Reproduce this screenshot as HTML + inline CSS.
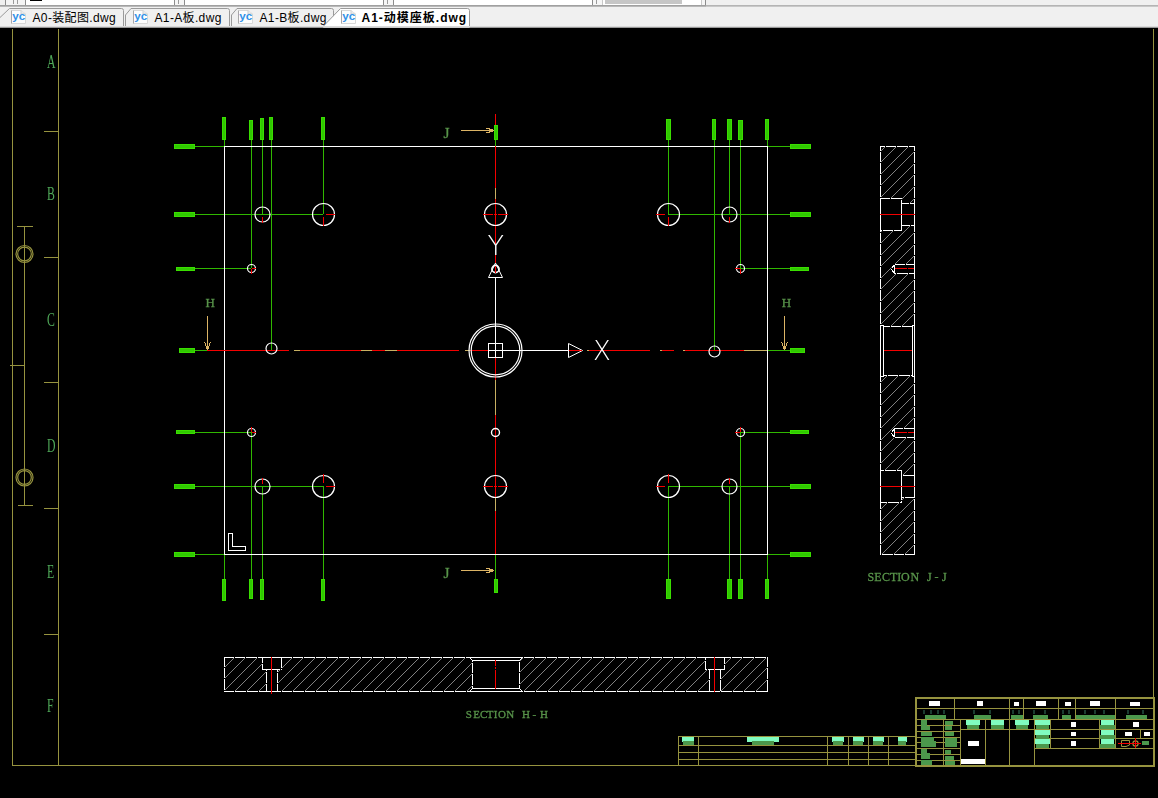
<!DOCTYPE html>
<html><head><meta charset="utf-8"><title>A1-动模座板.dwg</title>
<style>
html,body{margin:0;padding:0;background:#000;}
body{width:1158px;height:798px;position:relative;overflow:hidden;font-family:"Liberation Sans","Noto Sans CJK SC",sans-serif;}
#cad{position:absolute;left:0;top:0;}
#cad text{filter:url(#nolcd)}
#cad rect,#cad line{shape-rendering:crispEdges}
#cad text{font-family:"Liberation Serif","Noto Serif CJK SC",serif;}
#cad text.ucs{font-family:"DejaVu Sans Light","DejaVu Sans","Liberation Sans",sans-serif;font-weight:200}
#cad text.zl{font-family:"Liberation Serif",serif;}
#cad text.sc,#cad text.lb{stroke:#58944a;stroke-width:.3px}

#tb{position:absolute;left:0;top:0;width:1158px;height:5px;background:#f0f0f0;overflow:hidden}
#tb div{position:absolute;top:0;height:5px}
#tb .vd{width:1px;background:#8c8c8c}
#tb .mk{width:1px;height:4px;background:#9a9a9a}
#sep1{position:absolute;left:0;top:5px;width:1158px;height:1px;background:linear-gradient(90deg,#a0a0a0 0,#a0a0a0 706px,#b4b4b4 706px)}
#sep2{position:absolute;left:0;top:6px;width:1158px;height:1px;background:linear-gradient(90deg,#b8b8b8 0,#b8b8b8 706px,#c8c8c8 706px)}
#strip{position:absolute;left:0;top:7px;width:1158px;height:21px;background:#f0f0f0;border-bottom:0}
#strip:after{content:"";position:absolute;left:0;top:19px;width:1158px;height:1px;background:#dadada}
#strip:before{content:"";position:absolute;left:0;top:20px;width:1158px;height:1px;background:#989898}
#tabsvg{position:absolute;left:0;top:0}
.tl{position:absolute;top:4px;font-size:12px;line-height:14px;color:#000;white-space:nowrap;letter-spacing:0.35px}
.tl.b{font-weight:bold;letter-spacing:1.0px}
.ico{position:absolute;top:3px;width:15px;height:14px}
</style></head><body>
<svg id="cad" width="1158" height="798" viewBox="0 0 1158 798">
<defs><filter id="nolcd" x="-20%" y="-20%" width="140%" height="140%"><feOffset dx="0" dy="0"/></filter></defs>
<rect x="0" y="28" width="1158" height="770" fill="#000"/>
<rect x="12" y="29" width="1" height="736" fill="#96933f"/>
<rect x="58" y="29" width="1" height="736" fill="#96933f"/>
<rect x="1153" y="29" width="1" height="669" fill="#96933f"/>
<rect x="12" y="765" width="904" height="1" fill="#96933f"/>
<rect x="44" y="131" width="14" height="1" fill="#96933f"/>
<rect x="44" y="257" width="14" height="1" fill="#96933f"/>
<rect x="44" y="382" width="14" height="1" fill="#96933f"/>
<rect x="44" y="508" width="14" height="1" fill="#96933f"/>
<rect x="44" y="634" width="14" height="1" fill="#96933f"/>
<rect x="24" y="226" width="1" height="279" fill="#96933f"/>
<rect x="17" y="226" width="16" height="1" fill="#96933f"/>
<rect x="18" y="505" width="15" height="1" fill="#96933f"/>
<rect x="10" y="365" width="14" height="1" fill="#96933f"/>
<circle cx="24.5" cy="254" r="8.5" stroke="#96933f" stroke-width="1.2" fill="none"/>
<circle cx="24.5" cy="254" r="6.8" stroke="#96933f" stroke-width="1.2" fill="none"/>
<circle cx="24.5" cy="477.5" r="8.5" stroke="#96933f" stroke-width="1.2" fill="none"/>
<circle cx="24.5" cy="477.5" r="6.8" stroke="#96933f" stroke-width="1.2" fill="none"/>
<text transform="translate(47,68) scale(0.62,1)" fill="#4fa858" font-size="19" class="zl">A</text>
<text transform="translate(47,200) scale(0.62,1)" fill="#4fa858" font-size="19" class="zl">B</text>
<text transform="translate(47,326) scale(0.62,1)" fill="#4fa858" font-size="19" class="zl">C</text>
<text transform="translate(47,452) scale(0.62,1)" fill="#4fa858" font-size="19" class="zl">D</text>
<text transform="translate(47,578) scale(0.62,1)" fill="#4fa858" font-size="19" class="zl">E</text>
<text transform="translate(47,712) scale(0.62,1)" fill="#4fa858" font-size="19" class="zl">F</text>
<rect x="222" y="117" width="4" height="23" fill="#3ade00"/>
<rect x="223" y="118" width="2" height="21" fill="#30c800"/>
<rect x="249" y="120" width="4" height="20" fill="#3ade00"/>
<rect x="250" y="121" width="2" height="18" fill="#30c800"/>
<rect x="260" y="118" width="4" height="22" fill="#3ade00"/>
<rect x="261" y="119" width="2" height="20" fill="#30c800"/>
<rect x="269" y="117" width="4" height="23" fill="#3ade00"/>
<rect x="270" y="118" width="2" height="21" fill="#30c800"/>
<rect x="321" y="117" width="4" height="23" fill="#3ade00"/>
<rect x="322" y="118" width="2" height="21" fill="#30c800"/>
<rect x="666" y="119" width="5" height="21" fill="#3ade00"/>
<rect x="667" y="120" width="3" height="19" fill="#30c800"/>
<rect x="712" y="119" width="4" height="21" fill="#3ade00"/>
<rect x="713" y="120" width="2" height="19" fill="#30c800"/>
<rect x="727" y="119" width="5" height="21" fill="#3ade00"/>
<rect x="728" y="120" width="3" height="19" fill="#30c800"/>
<rect x="738" y="120" width="5" height="20" fill="#3ade00"/>
<rect x="739" y="121" width="3" height="18" fill="#30c800"/>
<rect x="765" y="119" width="4" height="21" fill="#3ade00"/>
<rect x="766" y="120" width="2" height="19" fill="#30c800"/>
<rect x="222" y="579" width="4" height="22" fill="#3ade00"/>
<rect x="223" y="580" width="2" height="20" fill="#30c800"/>
<rect x="249" y="579" width="4" height="20" fill="#3ade00"/>
<rect x="250" y="580" width="2" height="18" fill="#30c800"/>
<rect x="260" y="579" width="4" height="21" fill="#3ade00"/>
<rect x="261" y="580" width="2" height="19" fill="#30c800"/>
<rect x="321" y="579" width="4" height="22" fill="#3ade00"/>
<rect x="322" y="580" width="2" height="20" fill="#30c800"/>
<rect x="666" y="579" width="5" height="20" fill="#3ade00"/>
<rect x="667" y="580" width="3" height="18" fill="#30c800"/>
<rect x="727" y="579" width="5" height="20" fill="#3ade00"/>
<rect x="728" y="580" width="3" height="18" fill="#30c800"/>
<rect x="738" y="579" width="5" height="20" fill="#3ade00"/>
<rect x="739" y="580" width="3" height="18" fill="#30c800"/>
<rect x="765" y="579" width="4" height="20" fill="#3ade00"/>
<rect x="766" y="580" width="2" height="18" fill="#30c800"/>
<rect x="174" y="144" width="21" height="5" fill="#3ade00"/>
<rect x="175" y="145" width="19" height="3" fill="#30c800"/>
<rect x="174" y="212" width="21" height="5" fill="#3ade00"/>
<rect x="175" y="213" width="19" height="3" fill="#30c800"/>
<rect x="176" y="267" width="19" height="4" fill="#3ade00"/>
<rect x="177" y="268" width="17" height="2" fill="#30c800"/>
<rect x="179" y="348" width="16" height="5" fill="#3ade00"/>
<rect x="180" y="349" width="14" height="3" fill="#30c800"/>
<rect x="176" y="430" width="19" height="4" fill="#3ade00"/>
<rect x="177" y="431" width="17" height="2" fill="#30c800"/>
<rect x="174" y="484" width="21" height="5" fill="#3ade00"/>
<rect x="175" y="485" width="19" height="3" fill="#30c800"/>
<rect x="174" y="552" width="21" height="5" fill="#3ade00"/>
<rect x="175" y="553" width="19" height="3" fill="#30c800"/>
<rect x="790" y="144" width="21" height="5" fill="#3ade00"/>
<rect x="791" y="145" width="19" height="3" fill="#30c800"/>
<rect x="790" y="212" width="21" height="5" fill="#3ade00"/>
<rect x="791" y="213" width="19" height="3" fill="#30c800"/>
<rect x="790" y="267" width="19" height="4" fill="#3ade00"/>
<rect x="791" y="268" width="17" height="2" fill="#30c800"/>
<rect x="790" y="348" width="15" height="5" fill="#3ade00"/>
<rect x="791" y="349" width="13" height="3" fill="#30c800"/>
<rect x="790" y="430" width="19" height="4" fill="#3ade00"/>
<rect x="791" y="431" width="17" height="2" fill="#30c800"/>
<rect x="790" y="484" width="21" height="5" fill="#3ade00"/>
<rect x="791" y="485" width="19" height="3" fill="#30c800"/>
<rect x="790" y="552" width="21" height="5" fill="#3ade00"/>
<rect x="791" y="553" width="19" height="3" fill="#30c800"/>
<rect x="224" y="140" width="1" height="6" fill="#30b800"/>
<rect x="224" y="554" width="1" height="25" fill="#30b800"/>
<rect x="767" y="140" width="1" height="6" fill="#30b800"/>
<rect x="767" y="554" width="1" height="25" fill="#30b800"/>
<rect x="195" y="146" width="29" height="1" fill="#30b800"/>
<rect x="195" y="554" width="29" height="1" fill="#30b800"/>
<rect x="767" y="146" width="23" height="1" fill="#30b800"/>
<rect x="767" y="554" width="23" height="1" fill="#30b800"/>
<rect x="251" y="140" width="1" height="128" fill="#30b800"/>
<rect x="251" y="432" width="1" height="147" fill="#30b800"/>
<rect x="262" y="140" width="1" height="74" fill="#30b800"/>
<rect x="262" y="486" width="1" height="93" fill="#30b800"/>
<rect x="271" y="140" width="1" height="210" fill="#30b800"/>
<rect x="323" y="140" width="1" height="74" fill="#30b800"/>
<rect x="323" y="486" width="1" height="93" fill="#30b800"/>
<rect x="668" y="140" width="1" height="74" fill="#30b800"/>
<rect x="668" y="486" width="1" height="93" fill="#30b800"/>
<rect x="714" y="140" width="1" height="211" fill="#30b800"/>
<rect x="729" y="140" width="1" height="74" fill="#30b800"/>
<rect x="729" y="486" width="1" height="93" fill="#30b800"/>
<rect x="740" y="140" width="1" height="128" fill="#30b800"/>
<rect x="740" y="432" width="1" height="147" fill="#30b800"/>
<rect x="195" y="214" width="128" height="1" fill="#30b800"/>
<rect x="195" y="486" width="128" height="1" fill="#30b800"/>
<rect x="668" y="214" width="122" height="1" fill="#30b800"/>
<rect x="668" y="486" width="122" height="1" fill="#30b800"/>
<rect x="195" y="268" width="56" height="1" fill="#30b800"/>
<rect x="195" y="432" width="56" height="1" fill="#30b800"/>
<rect x="740" y="268" width="50" height="1" fill="#30b800"/>
<rect x="740" y="432" width="50" height="1" fill="#30b800"/>
<rect x="195" y="350" width="12" height="1" fill="#30b800"/>
<rect x="767" y="350" width="23" height="1" fill="#30b800"/>
<rect x="495" y="140" width="1" height="6" fill="#30b800"/>
<rect x="495" y="554" width="1" height="25" fill="#30b800"/>
<rect x="224" y="146" width="544" height="1" fill="#ffffff"/>
<rect x="224" y="554" width="544" height="1" fill="#ffffff"/>
<rect x="224" y="146" width="1" height="408" fill="#ffffff"/>
<rect x="767" y="146" width="1" height="408" fill="#ffffff"/>
<rect x="495" y="114" width="1" height="11" fill="#f40000"/>
<rect x="495" y="146" width="1" height="98" fill="#f40000"/>
<rect x="495" y="188" width="1" height="11" fill="#c8b062"/>
<rect x="495" y="255" width="1" height="8" fill="#f40000"/>
<rect x="495" y="357" width="1" height="23" fill="#f40000"/>
<rect x="495" y="380" width="1" height="35" fill="#c8b062"/>
<rect x="495" y="415" width="1" height="139" fill="#f40000"/>
<rect x="495" y="497" width="1" height="14" fill="#c8b062"/>
<rect x="494" y="125" width="4" height="15" fill="#3ade00"/>
<rect x="495" y="126" width="2" height="13" fill="#30c800"/>
<rect x="494" y="579" width="4" height="14" fill="#3ade00"/>
<rect x="495" y="580" width="2" height="12" fill="#30c800"/>
<rect x="207" y="350" width="82" height="1" fill="#f40000"/>
<rect x="294" y="350" width="6" height="1" fill="#c8b062"/>
<rect x="300" y="350" width="61" height="1" fill="#f40000"/>
<rect x="361" y="350" width="11" height="1" fill="#c8b062"/>
<rect x="372" y="350" width="13" height="1" fill="#f40000"/>
<rect x="385" y="350" width="12" height="1" fill="#c8b062"/>
<rect x="397" y="350" width="62" height="1" fill="#f40000"/>
<rect x="465" y="350" width="5" height="1" fill="#c8b062"/>
<rect x="470" y="350" width="18" height="1" fill="#f40000"/>
<rect x="589" y="350" width="61" height="1" fill="#f40000"/>
<rect x="587" y="350" width="2" height="1" fill="#c8b062"/>
<rect x="660" y="350" width="2" height="1" fill="#c8b062"/>
<rect x="662" y="350" width="12" height="1" fill="#f40000"/>
<rect x="683" y="350" width="2" height="1" fill="#c8b062"/>
<rect x="685" y="350" width="59" height="1" fill="#f40000"/>
<rect x="744" y="350" width="23" height="1" fill="#c8b062"/>
<circle cx="323.5" cy="214.5" r="11" stroke="#ffffff" stroke-width="1.2" fill="none"/>
<circle cx="323.5" cy="486.5" r="11" stroke="#ffffff" stroke-width="1.2" fill="none"/>
<circle cx="495.5" cy="214.5" r="11" stroke="#ffffff" stroke-width="1.2" fill="none"/>
<circle cx="495.5" cy="486.5" r="11" stroke="#ffffff" stroke-width="1.2" fill="none"/>
<circle cx="668.5" cy="214.5" r="11" stroke="#ffffff" stroke-width="1.2" fill="none"/>
<circle cx="668.5" cy="486.5" r="11" stroke="#ffffff" stroke-width="1.2" fill="none"/>
<circle cx="262.5" cy="214.5" r="7.5" stroke="#ffffff" stroke-width="1.2" fill="none"/>
<circle cx="262.5" cy="486.5" r="7.5" stroke="#ffffff" stroke-width="1.2" fill="none"/>
<circle cx="729.5" cy="214.5" r="7.5" stroke="#ffffff" stroke-width="1.2" fill="none"/>
<circle cx="729.5" cy="486.5" r="7.5" stroke="#ffffff" stroke-width="1.2" fill="none"/>
<circle cx="251.5" cy="268.5" r="4" stroke="#ffffff" stroke-width="1.2" fill="none"/>
<circle cx="251.5" cy="432.5" r="4" stroke="#ffffff" stroke-width="1.2" fill="none"/>
<circle cx="740.5" cy="268.5" r="4" stroke="#ffffff" stroke-width="1.2" fill="none"/>
<circle cx="740.5" cy="432.5" r="4" stroke="#ffffff" stroke-width="1.2" fill="none"/>
<circle cx="495.5" cy="432.5" r="4" stroke="#ffffff" stroke-width="1.4" fill="none"/>
<circle cx="271.5" cy="348.5" r="5.5" stroke="#ffffff" stroke-width="1.2" fill="none"/>
<circle cx="714.5" cy="351.5" r="5.5" stroke="#ffffff" stroke-width="1.2" fill="none"/>
<rect x="326" y="214" width="9" height="1" fill="#f40000"/>
<rect x="323" y="217" width="1" height="9" fill="#f40000"/>
<rect x="326" y="486" width="9" height="1" fill="#f40000"/>
<rect x="323" y="474" width="1" height="9" fill="#f40000"/>
<rect x="656" y="214" width="9" height="1" fill="#f40000"/>
<rect x="668" y="217" width="1" height="9" fill="#f40000"/>
<rect x="656" y="486" width="9" height="1" fill="#f40000"/>
<rect x="668" y="474" width="1" height="9" fill="#f40000"/>
<rect x="483" y="214" width="10" height="1" fill="#f40000"/>
<rect x="498" y="214" width="10" height="1" fill="#f40000"/>
<rect x="494" y="214" width="3" height="1" fill="#f40000"/>
<rect x="483" y="486" width="10" height="1" fill="#f40000"/>
<rect x="498" y="486" width="10" height="1" fill="#f40000"/>
<rect x="494" y="486" width="3" height="1" fill="#f40000"/>
<rect x="262" y="217" width="1" height="6" fill="#f40000"/>
<rect x="262" y="478" width="1" height="6" fill="#f40000"/>
<rect x="729" y="217" width="1" height="6" fill="#f40000"/>
<rect x="729" y="478" width="1" height="6" fill="#f40000"/>
<rect x="252" y="268" width="4" height="1" fill="#f40000"/>
<rect x="251" y="269" width="1" height="5" fill="#f40000"/>
<rect x="252" y="432" width="4" height="1" fill="#f40000"/>
<rect x="251" y="427" width="1" height="5" fill="#f40000"/>
<rect x="735" y="268" width="5" height="1" fill="#f40000"/>
<rect x="740" y="269" width="1" height="5" fill="#f40000"/>
<rect x="735" y="432" width="5" height="1" fill="#f40000"/>
<rect x="740" y="427" width="1" height="5" fill="#f40000"/>
<circle cx="495.5" cy="350.5" r="26.5" stroke="#ffffff" stroke-width="1.2" fill="none"/>
<circle cx="495.5" cy="350.5" r="24.3" stroke="#ffffff" stroke-width="1.2" fill="none"/>
<rect x="488.5" y="343.5" width="14" height="14" fill="none" stroke="#fff" shape-rendering="crispEdges"/>
<rect x="495" y="277" width="1" height="80" fill="#ffffff"/>
<rect x="488" y="350" width="80" height="1" fill="#ffffff"/>
<polygon points="568.5,343.5 568.5,357.5 582.5,350.5" fill="none" stroke="#fff"/>
<rect x="569" y="350" width="13" height="1" fill="#f40000"/>
<rect x="593" y="350" width="18" height="1" fill="#f40000"/>
<text class="ucs" x="602" y="360" text-anchor="middle" font-size="26" fill="#fff">X</text>
<text class="ucs" x="495.7" y="255" text-anchor="middle" font-size="27" fill="#fff">Y</text>
<polygon points="495.5,263 488.5,277.5 502.5,277.5" fill="none" stroke="#fff"/>
<circle cx="495.5" cy="269" r="3.6" stroke="#ffffff" stroke-width="1.6" fill="none"/>
<rect x="495" y="266" width="1" height="7" fill="#f40000"/>
<polygon points="228.5,533.5 232.5,533.5 232.5,546.5 245.5,546.5 245.5,550.5 228.5,550.5" fill="none" stroke="#fff" shape-rendering="crispEdges"/>
<text x="443.5" y="137.5" fill="#58944a" font-size="15.5" class="lb">J</text>
<text x="443.5" y="577.5" fill="#58944a" font-size="15.5" class="lb">J</text>
<rect x="461" y="130" width="33" height="1" fill="#dcb465"/>
<line x1="486.5" y1="128" x2="494" y2="130.5" stroke="#dcb465" stroke-width="1"/>
<line x1="486.5" y1="133" x2="494" y2="130.5" stroke="#dcb465" stroke-width="1"/>
<rect x="461" y="570" width="33" height="1" fill="#dcb465"/>
<line x1="486.5" y1="568" x2="494" y2="570.5" stroke="#dcb465" stroke-width="1"/>
<line x1="486.5" y1="573" x2="494" y2="570.5" stroke="#dcb465" stroke-width="1"/>
<text x="205.5" y="307" fill="#58944a" font-size="13" class="lb">H</text>
<text x="781.8" y="307" fill="#58944a" font-size="13" class="lb">H</text>
<rect x="207" y="316" width="1" height="34" fill="#dcb465"/>
<line x1="204.5" y1="342" x2="207.5" y2="350" stroke="#dcb465" stroke-width="1"/>
<line x1="210.5" y1="342" x2="207.5" y2="350" stroke="#dcb465" stroke-width="1"/>
<rect x="784" y="316" width="1" height="34" fill="#dcb465"/>
<line x1="781.5" y1="342" x2="784.5" y2="350" stroke="#dcb465" stroke-width="1"/>
<line x1="787.5" y1="342" x2="784.5" y2="350" stroke="#dcb465" stroke-width="1"/>
<clipPath id="cj"><rect x="880" y="146" width="34" height="408"/></clipPath>
<g clip-path="url(#cj)" shape-rendering="crispEdges">
<line x1="870.5" y1="138.5" x2="924.5" y2="84.5" stroke="#808080" stroke-width="1"/>
<line x1="870.5" y1="149.5" x2="924.5" y2="95.5" stroke="#808080" stroke-width="1"/>
<line x1="870.5" y1="161.5" x2="924.5" y2="107.5" stroke="#808080" stroke-width="1"/>
<line x1="870.5" y1="172.5" x2="924.5" y2="118.5" stroke="#808080" stroke-width="1"/>
<line x1="870.5" y1="184.5" x2="924.5" y2="130.5" stroke="#808080" stroke-width="1"/>
<line x1="870.5" y1="195.5" x2="924.5" y2="141.5" stroke="#808080" stroke-width="1"/>
<line x1="870.5" y1="207.5" x2="924.5" y2="153.5" stroke="#808080" stroke-width="1"/>
<line x1="870.5" y1="218.5" x2="924.5" y2="164.5" stroke="#808080" stroke-width="1"/>
<line x1="870.5" y1="230.5" x2="924.5" y2="176.5" stroke="#808080" stroke-width="1"/>
<line x1="870.5" y1="242.5" x2="924.5" y2="188.5" stroke="#808080" stroke-width="1"/>
<line x1="870.5" y1="253.5" x2="924.5" y2="199.5" stroke="#808080" stroke-width="1"/>
<line x1="870.5" y1="265.5" x2="924.5" y2="211.5" stroke="#808080" stroke-width="1"/>
<line x1="870.5" y1="276.5" x2="924.5" y2="222.5" stroke="#808080" stroke-width="1"/>
<line x1="870.5" y1="288.5" x2="924.5" y2="234.5" stroke="#808080" stroke-width="1"/>
<line x1="870.5" y1="299.5" x2="924.5" y2="245.5" stroke="#808080" stroke-width="1"/>
<line x1="870.5" y1="311.5" x2="924.5" y2="257.5" stroke="#808080" stroke-width="1"/>
<line x1="870.5" y1="323.5" x2="924.5" y2="269.5" stroke="#808080" stroke-width="1"/>
<line x1="870.5" y1="334.5" x2="924.5" y2="280.5" stroke="#808080" stroke-width="1"/>
<line x1="870.5" y1="346.5" x2="924.5" y2="292.5" stroke="#808080" stroke-width="1"/>
<line x1="870.5" y1="357.5" x2="924.5" y2="303.5" stroke="#808080" stroke-width="1"/>
<line x1="870.5" y1="369.5" x2="924.5" y2="315.5" stroke="#808080" stroke-width="1"/>
<line x1="870.5" y1="380.5" x2="924.5" y2="326.5" stroke="#808080" stroke-width="1"/>
<line x1="870.5" y1="392.5" x2="924.5" y2="338.5" stroke="#808080" stroke-width="1"/>
<line x1="870.5" y1="403.5" x2="924.5" y2="349.5" stroke="#808080" stroke-width="1"/>
<line x1="870.5" y1="415.5" x2="924.5" y2="361.5" stroke="#808080" stroke-width="1"/>
<line x1="870.5" y1="427.5" x2="924.5" y2="373.5" stroke="#808080" stroke-width="1"/>
<line x1="870.5" y1="438.5" x2="924.5" y2="384.5" stroke="#808080" stroke-width="1"/>
<line x1="870.5" y1="450.5" x2="924.5" y2="396.5" stroke="#808080" stroke-width="1"/>
<line x1="870.5" y1="461.5" x2="924.5" y2="407.5" stroke="#808080" stroke-width="1"/>
<line x1="870.5" y1="473.5" x2="924.5" y2="419.5" stroke="#808080" stroke-width="1"/>
<line x1="870.5" y1="484.5" x2="924.5" y2="430.5" stroke="#808080" stroke-width="1"/>
<line x1="870.5" y1="496.5" x2="924.5" y2="442.5" stroke="#808080" stroke-width="1"/>
<line x1="870.5" y1="507.5" x2="924.5" y2="453.5" stroke="#808080" stroke-width="1"/>
<line x1="870.5" y1="519.5" x2="924.5" y2="465.5" stroke="#808080" stroke-width="1"/>
<line x1="870.5" y1="531.5" x2="924.5" y2="477.5" stroke="#808080" stroke-width="1"/>
<line x1="870.5" y1="542.5" x2="924.5" y2="488.5" stroke="#808080" stroke-width="1"/>
<line x1="870.5" y1="554.5" x2="924.5" y2="500.5" stroke="#808080" stroke-width="1"/>
<line x1="870.5" y1="565.5" x2="924.5" y2="511.5" stroke="#808080" stroke-width="1"/>
<line x1="870.5" y1="577.5" x2="924.5" y2="523.5" stroke="#808080" stroke-width="1"/>
<line x1="870.5" y1="588.5" x2="924.5" y2="534.5" stroke="#808080" stroke-width="1"/>
<line x1="870.5" y1="600.5" x2="924.5" y2="546.5" stroke="#808080" stroke-width="1"/>
<line x1="870.5" y1="612.5" x2="924.5" y2="558.5" stroke="#808080" stroke-width="1"/>
</g>
<rect x="880" y="198" width="22" height="33" fill="#000"/>
<rect x="880" y="198" width="22" height="1" fill="#ffffff"/>
<rect x="880" y="230" width="22" height="1" fill="#ffffff"/>
<rect x="880" y="198" width="1" height="32" fill="#ffffff"/>
<rect x="901" y="198" width="1" height="32" fill="#ffffff"/>
<rect x="901" y="203" width="14" height="23" fill="#000"/>
<rect x="901" y="203" width="14" height="1" fill="#ffffff"/>
<rect x="901" y="225" width="14" height="1" fill="#ffffff"/>
<rect x="901" y="203" width="1" height="22" fill="#ffffff"/>
<rect x="914" y="203" width="1" height="22" fill="#ffffff"/>
<rect x="880" y="214" width="35" height="1" fill="#f40000"/>
<rect x="880" y="470" width="22" height="33" fill="#000"/>
<rect x="880" y="470" width="22" height="1" fill="#ffffff"/>
<rect x="880" y="502" width="22" height="1" fill="#ffffff"/>
<rect x="880" y="470" width="1" height="32" fill="#ffffff"/>
<rect x="901" y="470" width="1" height="32" fill="#ffffff"/>
<rect x="901" y="475" width="14" height="23" fill="#000"/>
<rect x="901" y="475" width="14" height="1" fill="#ffffff"/>
<rect x="901" y="497" width="14" height="1" fill="#ffffff"/>
<rect x="901" y="475" width="1" height="22" fill="#ffffff"/>
<rect x="914" y="475" width="1" height="22" fill="#ffffff"/>
<rect x="880" y="486" width="35" height="1" fill="#f40000"/>
<polygon points="914,264 894,264 891,268.5 894,274 914,274" fill="#000"/>
<rect x="894" y="264" width="20" height="1" fill="#ffffff"/>
<rect x="894" y="273" width="20" height="1" fill="#ffffff"/>
<rect x="894" y="264" width="1" height="10" fill="#ffffff"/>
<line x1="894.5" y1="264.5" x2="891.5" y2="268.5" stroke="#ffffff" stroke-width="1"/>
<line x1="894.5" y1="273.5" x2="891.5" y2="269.5" stroke="#ffffff" stroke-width="1"/>
<rect x="895" y="268" width="12" height="1" fill="#f40000"/>
<rect x="908" y="268" width="7" height="1" fill="#f40000"/>
<polygon points="914,428 894,428 891,432.5 894,438 914,438" fill="#000"/>
<rect x="894" y="428" width="20" height="1" fill="#ffffff"/>
<rect x="894" y="437" width="20" height="1" fill="#ffffff"/>
<rect x="894" y="428" width="1" height="10" fill="#ffffff"/>
<line x1="894.5" y1="428.5" x2="891.5" y2="432.5" stroke="#ffffff" stroke-width="1"/>
<line x1="894.5" y1="437.5" x2="891.5" y2="433.5" stroke="#ffffff" stroke-width="1"/>
<rect x="895" y="432" width="12" height="1" fill="#f40000"/>
<rect x="908" y="432" width="7" height="1" fill="#f40000"/>
<rect x="880" y="326" width="35" height="50" fill="#000"/>
<rect x="883" y="326" width="30" height="50" fill="#000"/>
<rect x="883" y="326" width="30" height="1" fill="#ffffff"/>
<rect x="883" y="375" width="30" height="1" fill="#ffffff"/>
<rect x="883" y="326" width="1" height="49" fill="#ffffff"/>
<rect x="912" y="326" width="1" height="49" fill="#ffffff"/>
<rect x="880" y="325" width="4" height="1" fill="#ffffff"/>
<rect x="912" y="325" width="3" height="1" fill="#ffffff"/>
<rect x="880" y="376" width="4" height="1" fill="#ffffff"/>
<rect x="912" y="376" width="3" height="1" fill="#ffffff"/>
<rect x="884" y="350" width="28" height="1" fill="#f40000"/>
<rect x="880" y="146" width="35" height="1" fill="#ffffff"/>
<rect x="880" y="554" width="35" height="1" fill="#ffffff"/>
<rect x="880" y="146" width="1" height="408" fill="#ffffff"/>
<rect x="914" y="146" width="1" height="408" fill="#ffffff"/>
<rect x="880" y="214" width="35" height="1" fill="#f40000"/>
<rect x="880" y="486" width="35" height="1" fill="#f40000"/>
<text y="581" x="870.8 877.9 885.9 893.7 899.3 905.3 914.8 921 929.3 936.4 944.4" text-anchor="middle" fill="#58944a" font-size="12" class="sc">SECTION J-J</text>
<clipPath id="ch"><rect x="224" y="657" width="543" height="34"/></clipPath>
<g clip-path="url(#ch)" shape-rendering="crispEdges">
<line x1="214.5" y1="654.5" x2="777.5" y2="91.5" stroke="#808080" stroke-width="1"/>
<line x1="214.5" y1="665.5" x2="777.5" y2="102.5" stroke="#808080" stroke-width="1"/>
<line x1="214.5" y1="677.5" x2="777.5" y2="114.5" stroke="#808080" stroke-width="1"/>
<line x1="214.5" y1="688.5" x2="777.5" y2="125.5" stroke="#808080" stroke-width="1"/>
<line x1="214.5" y1="700.5" x2="777.5" y2="137.5" stroke="#808080" stroke-width="1"/>
<line x1="214.5" y1="711.5" x2="777.5" y2="148.5" stroke="#808080" stroke-width="1"/>
<line x1="214.5" y1="723.5" x2="777.5" y2="160.5" stroke="#808080" stroke-width="1"/>
<line x1="214.5" y1="735.5" x2="777.5" y2="172.5" stroke="#808080" stroke-width="1"/>
<line x1="214.5" y1="746.5" x2="777.5" y2="183.5" stroke="#808080" stroke-width="1"/>
<line x1="214.5" y1="758.5" x2="777.5" y2="195.5" stroke="#808080" stroke-width="1"/>
<line x1="214.5" y1="769.5" x2="777.5" y2="206.5" stroke="#808080" stroke-width="1"/>
<line x1="214.5" y1="781.5" x2="777.5" y2="218.5" stroke="#808080" stroke-width="1"/>
<line x1="214.5" y1="792.5" x2="777.5" y2="229.5" stroke="#808080" stroke-width="1"/>
<line x1="214.5" y1="804.5" x2="777.5" y2="241.5" stroke="#808080" stroke-width="1"/>
<line x1="214.5" y1="815.5" x2="777.5" y2="252.5" stroke="#808080" stroke-width="1"/>
<line x1="214.5" y1="827.5" x2="777.5" y2="264.5" stroke="#808080" stroke-width="1"/>
<line x1="214.5" y1="839.5" x2="777.5" y2="276.5" stroke="#808080" stroke-width="1"/>
<line x1="214.5" y1="850.5" x2="777.5" y2="287.5" stroke="#808080" stroke-width="1"/>
<line x1="214.5" y1="862.5" x2="777.5" y2="299.5" stroke="#808080" stroke-width="1"/>
<line x1="214.5" y1="873.5" x2="777.5" y2="310.5" stroke="#808080" stroke-width="1"/>
<line x1="214.5" y1="885.5" x2="777.5" y2="322.5" stroke="#808080" stroke-width="1"/>
<line x1="214.5" y1="896.5" x2="777.5" y2="333.5" stroke="#808080" stroke-width="1"/>
<line x1="214.5" y1="908.5" x2="777.5" y2="345.5" stroke="#808080" stroke-width="1"/>
<line x1="214.5" y1="920.5" x2="777.5" y2="357.5" stroke="#808080" stroke-width="1"/>
<line x1="214.5" y1="931.5" x2="777.5" y2="368.5" stroke="#808080" stroke-width="1"/>
<line x1="214.5" y1="943.5" x2="777.5" y2="380.5" stroke="#808080" stroke-width="1"/>
<line x1="214.5" y1="954.5" x2="777.5" y2="391.5" stroke="#808080" stroke-width="1"/>
<line x1="214.5" y1="966.5" x2="777.5" y2="403.5" stroke="#808080" stroke-width="1"/>
<line x1="214.5" y1="977.5" x2="777.5" y2="414.5" stroke="#808080" stroke-width="1"/>
<line x1="214.5" y1="989.5" x2="777.5" y2="426.5" stroke="#808080" stroke-width="1"/>
<line x1="214.5" y1="1000.5" x2="777.5" y2="437.5" stroke="#808080" stroke-width="1"/>
<line x1="214.5" y1="1012.5" x2="777.5" y2="449.5" stroke="#808080" stroke-width="1"/>
<line x1="214.5" y1="1024.5" x2="777.5" y2="461.5" stroke="#808080" stroke-width="1"/>
<line x1="214.5" y1="1035.5" x2="777.5" y2="472.5" stroke="#808080" stroke-width="1"/>
<line x1="214.5" y1="1047.5" x2="777.5" y2="484.5" stroke="#808080" stroke-width="1"/>
<line x1="214.5" y1="1058.5" x2="777.5" y2="495.5" stroke="#808080" stroke-width="1"/>
<line x1="214.5" y1="1070.5" x2="777.5" y2="507.5" stroke="#808080" stroke-width="1"/>
<line x1="214.5" y1="1081.5" x2="777.5" y2="518.5" stroke="#808080" stroke-width="1"/>
<line x1="214.5" y1="1093.5" x2="777.5" y2="530.5" stroke="#808080" stroke-width="1"/>
<line x1="214.5" y1="1105.5" x2="777.5" y2="542.5" stroke="#808080" stroke-width="1"/>
<line x1="214.5" y1="1116.5" x2="777.5" y2="553.5" stroke="#808080" stroke-width="1"/>
<line x1="214.5" y1="1128.5" x2="777.5" y2="565.5" stroke="#808080" stroke-width="1"/>
<line x1="214.5" y1="1139.5" x2="777.5" y2="576.5" stroke="#808080" stroke-width="1"/>
<line x1="214.5" y1="1151.5" x2="777.5" y2="588.5" stroke="#808080" stroke-width="1"/>
<line x1="214.5" y1="1162.5" x2="777.5" y2="599.5" stroke="#808080" stroke-width="1"/>
<line x1="214.5" y1="1174.5" x2="777.5" y2="611.5" stroke="#808080" stroke-width="1"/>
<line x1="214.5" y1="1185.5" x2="777.5" y2="622.5" stroke="#808080" stroke-width="1"/>
<line x1="214.5" y1="1197.5" x2="777.5" y2="634.5" stroke="#808080" stroke-width="1"/>
<line x1="214.5" y1="1209.5" x2="777.5" y2="646.5" stroke="#808080" stroke-width="1"/>
<line x1="214.5" y1="1220.5" x2="777.5" y2="657.5" stroke="#808080" stroke-width="1"/>
<line x1="214.5" y1="1232.5" x2="777.5" y2="669.5" stroke="#808080" stroke-width="1"/>
<line x1="214.5" y1="1243.5" x2="777.5" y2="680.5" stroke="#808080" stroke-width="1"/>
<line x1="214.5" y1="1255.5" x2="777.5" y2="692.5" stroke="#808080" stroke-width="1"/>
<line x1="214.5" y1="1266.5" x2="777.5" y2="703.5" stroke="#808080" stroke-width="1"/>
</g>
<rect x="262" y="657" width="20" height="13" fill="#000"/>
<rect x="262" y="657" width="20" height="1" fill="#ffffff"/>
<rect x="262" y="669" width="20" height="1" fill="#ffffff"/>
<rect x="262" y="657" width="1" height="12" fill="#ffffff"/>
<rect x="281" y="657" width="1" height="12" fill="#ffffff"/>
<rect x="266" y="669" width="12" height="23" fill="#000"/>
<rect x="266" y="669" width="12" height="1" fill="#ffffff"/>
<rect x="266" y="691" width="12" height="1" fill="#ffffff"/>
<rect x="266" y="669" width="1" height="22" fill="#ffffff"/>
<rect x="277" y="669" width="1" height="22" fill="#ffffff"/>
<rect x="705" y="657" width="20" height="13" fill="#000"/>
<rect x="705" y="657" width="20" height="1" fill="#ffffff"/>
<rect x="705" y="669" width="20" height="1" fill="#ffffff"/>
<rect x="705" y="657" width="1" height="12" fill="#ffffff"/>
<rect x="724" y="657" width="1" height="12" fill="#ffffff"/>
<rect x="709" y="669" width="12" height="23" fill="#000"/>
<rect x="709" y="669" width="12" height="1" fill="#ffffff"/>
<rect x="709" y="691" width="12" height="1" fill="#ffffff"/>
<rect x="709" y="669" width="1" height="22" fill="#ffffff"/>
<rect x="720" y="669" width="1" height="22" fill="#ffffff"/>
<polygon points="470,657 523,657 520,660 520,689 523,692 470,692 472,689 472,660" fill="#000"/>
<rect x="472" y="660" width="48" height="29" fill="#000"/>
<rect x="472" y="660" width="48" height="1" fill="#ffffff"/>
<rect x="472" y="688" width="48" height="1" fill="#ffffff"/>
<rect x="472" y="660" width="1" height="28" fill="#ffffff"/>
<rect x="519" y="660" width="1" height="28" fill="#ffffff"/>
<line x1="469.5" y1="657.5" x2="472.5" y2="660.5" stroke="#ffffff" stroke-width="1"/>
<line x1="522.5" y1="657.5" x2="519.5" y2="660.5" stroke="#ffffff" stroke-width="1"/>
<line x1="469.5" y1="691.5" x2="472.5" y2="688.5" stroke="#ffffff" stroke-width="1"/>
<line x1="522.5" y1="691.5" x2="519.5" y2="688.5" stroke="#ffffff" stroke-width="1"/>
<rect x="495" y="660" width="1" height="6" fill="#f40000"/>
<rect x="495" y="667" width="1" height="2" fill="#f40000"/>
<rect x="495" y="670" width="1" height="19" fill="#f40000"/>
<rect x="224" y="657" width="544" height="1" fill="#ffffff"/>
<rect x="224" y="691" width="544" height="1" fill="#ffffff"/>
<rect x="224" y="657" width="1" height="34" fill="#ffffff"/>
<rect x="767" y="657" width="1" height="34" fill="#ffffff"/>
<rect x="271" y="657" width="1" height="37" fill="#f40000"/>
<rect x="714" y="657" width="1" height="35" fill="#f40000"/>
<text y="718" x="468.9 476.6 483.6 490 495.6 502 510.2 517 526 534.4 543.9" text-anchor="middle" fill="#58944a" font-size="11" class="sc">SECTION H-H</text>
<rect x="678" y="736" width="238" height="1" fill="#96933f"/>
<rect x="678" y="745" width="238" height="1" fill="#96933f"/>
<rect x="678" y="752" width="238" height="1" fill="#96933f"/>
<rect x="678" y="759" width="238" height="1" fill="#96933f"/>
<rect x="678" y="736" width="1" height="30" fill="#96933f"/>
<rect x="698" y="736" width="1" height="30" fill="#96933f"/>
<rect x="827" y="736" width="1" height="30" fill="#96933f"/>
<rect x="848" y="736" width="1" height="30" fill="#96933f"/>
<rect x="868" y="736" width="1" height="30" fill="#96933f"/>
<rect x="888" y="736" width="1" height="30" fill="#96933f"/>
<rect x="682" y="737" width="12" height="5" fill="#80fcc0"/>
<rect x="683" y="741" width="10.5" height="4" fill="#4c984c"/>
<rect x="747" y="737" width="32" height="5" fill="#80fcc0"/>
<rect x="752" y="741" width="22" height="4" fill="#4c984c"/>
<rect x="832" y="737" width="12" height="5" fill="#80fcc0"/>
<rect x="833" y="741" width="10" height="4" fill="#4c984c"/>
<rect x="852.5" y="737" width="11.5" height="5" fill="#80fcc0"/>
<rect x="853" y="741" width="10" height="4" fill="#4c984c"/>
<rect x="872.5" y="737" width="11.5" height="5" fill="#80fcc0"/>
<rect x="873" y="741" width="10" height="4" fill="#4c984c"/>
<rect x="897.5" y="737" width="9" height="5" fill="#80fcc0"/>
<rect x="898" y="741" width="8" height="4" fill="#4c984c"/>
<rect x="915" y="697" width="240" height="2" fill="#96933f"/>
<rect x="915" y="697" width="2" height="70" fill="#96933f"/>
<rect x="1153" y="697" width="2" height="70" fill="#96933f"/>
<rect x="915" y="765" width="240" height="2" fill="#96933f"/>
<rect x="917" y="708" width="236" height="1" fill="#96933f"/>
<rect x="917" y="719" width="236" height="1" fill="#96933f"/>
<rect x="954" y="699" width="1" height="20" fill="#96933f"/>
<rect x="1009" y="699" width="1" height="20" fill="#96933f"/>
<rect x="1023" y="699" width="1" height="20" fill="#96933f"/>
<rect x="1058" y="699" width="1" height="20" fill="#96933f"/>
<rect x="1075" y="699" width="1" height="20" fill="#96933f"/>
<rect x="1115" y="699" width="1" height="20" fill="#96933f"/>
<rect x="917" y="725" width="43" height="1" fill="#96933f"/>
<rect x="917" y="731" width="43" height="1" fill="#96933f"/>
<rect x="917" y="737" width="43" height="1" fill="#96933f"/>
<rect x="917" y="742" width="43" height="1" fill="#96933f"/>
<rect x="917" y="748" width="43" height="1" fill="#96933f"/>
<rect x="917" y="754" width="43" height="1" fill="#96933f"/>
<rect x="917" y="760" width="43" height="1" fill="#96933f"/>
<rect x="943" y="719" width="1" height="46" fill="#96933f"/>
<rect x="960" y="719" width="1" height="46" fill="#96933f"/>
<rect x="985" y="719" width="1" height="46" fill="#96933f"/>
<rect x="1009" y="719" width="1" height="46" fill="#96933f"/>
<rect x="1034" y="719" width="1" height="46" fill="#96933f"/>
<rect x="960" y="729" width="193" height="1" fill="#96933f"/>
<rect x="1034" y="738" width="119" height="1" fill="#96933f"/>
<rect x="1034" y="748" width="119" height="1" fill="#96933f"/>
<rect x="1050" y="719" width="1" height="29" fill="#96933f"/>
<rect x="1099" y="719" width="1" height="29" fill="#96933f"/>
<rect x="1115" y="719" width="1" height="29" fill="#96933f"/>
<rect x="1140" y="729" width="1" height="9" fill="#96933f"/>
<rect x="929" y="701" width="11" height="5" fill="#ffffff"/>
<rect x="977" y="701" width="6" height="5" fill="#ffffff"/>
<rect x="1014" y="702" width="5" height="4" fill="#ffffff"/>
<rect x="1036" y="701" width="10" height="5" fill="#ffffff"/>
<rect x="1065" y="702" width="6" height="4" fill="#ffffff"/>
<rect x="1090" y="701" width="10" height="5" fill="#ffffff"/>
<rect x="1130" y="702" width="10" height="4" fill="#ffffff"/>
<rect x="925" y="715" width="21" height="4" fill="#4c984c"/>
<rect x="974" y="715" width="17" height="4" fill="#4c984c"/>
<rect x="1011" y="715" width="12" height="4" fill="#4c984c"/>
<rect x="1033" y="715" width="15" height="4" fill="#4c984c"/>
<rect x="1062" y="715" width="9" height="4" fill="#4c984c"/>
<rect x="1076" y="715" width="39" height="4" fill="#4c984c"/>
<rect x="1126" y="715" width="21" height="4" fill="#4c984c"/>
<rect x="923" y="710" width="2" height="4" fill="#1b3c30"/>
<rect x="930" y="710" width="2" height="4" fill="#1b3c30"/>
<rect x="937" y="710" width="2" height="4" fill="#1b3c30"/>
<rect x="943" y="710" width="2" height="4" fill="#1b3c30"/>
<rect x="973" y="710" width="2" height="4" fill="#1b3c30"/>
<rect x="989" y="710" width="2" height="4" fill="#1b3c30"/>
<rect x="1012" y="710" width="2" height="4" fill="#1b3c30"/>
<rect x="1018" y="710" width="2" height="4" fill="#1b3c30"/>
<rect x="1033" y="710" width="2" height="4" fill="#1b3c30"/>
<rect x="1044" y="710" width="2" height="4" fill="#1b3c30"/>
<rect x="1062" y="710" width="2" height="4" fill="#1b3c30"/>
<rect x="1068" y="710" width="2" height="4" fill="#1b3c30"/>
<rect x="1084" y="710" width="2" height="4" fill="#1b3c30"/>
<rect x="1094" y="710" width="2" height="4" fill="#1b3c30"/>
<rect x="1103" y="710" width="2" height="4" fill="#1b3c30"/>
<rect x="1127" y="710" width="2" height="4" fill="#1b3c30"/>
<rect x="1142" y="710" width="2" height="4" fill="#1b3c30"/>
<rect x="921" y="720" width="6" height="5.5" fill="#4c984c"/>
<rect x="921" y="725.5" width="9" height="4.5" fill="#4c984c"/>
<rect x="921" y="731.5" width="11" height="4.5" fill="#4c984c"/>
<rect x="921" y="737" width="13" height="4" fill="#4c984c"/>
<rect x="921" y="741" width="15" height="6" fill="#4c984c"/>
<rect x="921" y="749" width="6" height="4" fill="#4c984c"/>
<rect x="921" y="753" width="9" height="5.5" fill="#4c984c"/>
<rect x="921" y="760" width="11" height="5" fill="#4c984c"/>
<rect x="945" y="721" width="8" height="4" fill="#4c984c"/>
<rect x="945" y="726" width="7" height="4" fill="#4c984c"/>
<rect x="945" y="732" width="9" height="4" fill="#4c984c"/>
<rect x="945" y="738" width="12" height="4.5" fill="#4c984c"/>
<rect x="945" y="743" width="12" height="4" fill="#4c984c"/>
<rect x="945" y="750" width="6" height="3.5" fill="#4c984c"/>
<rect x="945" y="756" width="9" height="3.5" fill="#4c984c"/>
<rect x="945" y="761" width="10" height="4" fill="#4c984c"/>
<rect x="966" y="720" width="14" height="5" fill="#80fcc0"/>
<rect x="967" y="725" width="12" height="3.5" fill="#4c984c"/>
<rect x="991" y="720" width="13" height="5" fill="#80fcc0"/>
<rect x="991" y="725" width="13" height="3.5" fill="#4c984c"/>
<rect x="1015" y="720" width="14" height="5" fill="#80fcc0"/>
<rect x="1016" y="725" width="12" height="3.5" fill="#4c984c"/>
<rect x="1035" y="720" width="15" height="5" fill="#80fcc0"/>
<rect x="1036" y="725" width="13" height="3.5" fill="#4c984c"/>
<rect x="1101" y="720" width="13" height="5" fill="#80fcc0"/>
<rect x="1100" y="725" width="15" height="3.5" fill="#4c984c"/>
<rect x="1035" y="730" width="15" height="5" fill="#80fcc0"/>
<rect x="1036" y="735" width="13" height="3.5" fill="#4c984c"/>
<rect x="1101" y="730" width="13" height="5" fill="#80fcc0"/>
<rect x="1100" y="735" width="15" height="3.5" fill="#4c984c"/>
<rect x="1035" y="739" width="15" height="5" fill="#80fcc0"/>
<rect x="1036" y="744" width="13" height="3.5" fill="#4c984c"/>
<rect x="1101" y="739" width="13" height="5" fill="#80fcc0"/>
<rect x="1100" y="744" width="15" height="3.5" fill="#4c984c"/>
<rect x="968" y="741" width="11" height="5" fill="#ffffff"/>
<rect x="961" y="759" width="24" height="5" fill="#ffffff"/>
<rect x="1071" y="722" width="5" height="5" fill="#ffffff"/>
<rect x="1071" y="732" width="5" height="4" fill="#ffffff"/>
<rect x="1071" y="741" width="5" height="5" fill="#ffffff"/>
<rect x="1133" y="722" width="6" height="5" fill="#ffffff"/>
<rect x="1125" y="732" width="7" height="4" fill="#ffffff"/>
<rect x="1144" y="732" width="6" height="4" fill="#ffffff"/>
<polygon points="1121.5,740.5 1129.5,740.5 1129.5,745 1126,746.5 1121.5,746.5" fill="none" stroke="#96933f"/>
<circle cx="1135.5" cy="743.5" r="2.6" stroke="#96933f" stroke-width="1.2" fill="none"/>
<rect x="1118" y="743" width="23" height="1" fill="#f40000"/>
<rect x="1135" y="738" width="1" height="10" fill="#f40000"/>
<rect x="1142" y="741" width="7" height="4" fill="#4c984c"/>
<rect x="885" y="146" width="1" height="1" fill="#000"/>
<rect x="896" y="146" width="1" height="1" fill="#000"/>
<rect x="908" y="146" width="1" height="1" fill="#000"/>
<rect x="880" y="151" width="1" height="1" fill="#000"/>
<rect x="914" y="151" width="1" height="1" fill="#000"/>
<rect x="880" y="162" width="1" height="1" fill="#000"/>
<rect x="914" y="163" width="1" height="1" fill="#000"/>
<rect x="880" y="174" width="1" height="1" fill="#000"/>
<rect x="914" y="174" width="1" height="1" fill="#000"/>
<rect x="880" y="185" width="1" height="1" fill="#000"/>
<rect x="914" y="186" width="1" height="1" fill="#000"/>
<rect x="880" y="197" width="1" height="1" fill="#000"/>
<rect x="890" y="198" width="1" height="1" fill="#000"/>
<rect x="914" y="198" width="1" height="1" fill="#000"/>
<rect x="901" y="199" width="1" height="1" fill="#000"/>
<rect x="909" y="203" width="1" height="1" fill="#000"/>
<rect x="910" y="225" width="1" height="1" fill="#000"/>
<rect x="882" y="230" width="1" height="1" fill="#000"/>
<rect x="893" y="230" width="1" height="1" fill="#000"/>
<rect x="880" y="232" width="1" height="1" fill="#000"/>
<rect x="914" y="232" width="1" height="1" fill="#000"/>
<rect x="880" y="243" width="1" height="1" fill="#000"/>
<rect x="914" y="244" width="1" height="1" fill="#000"/>
<rect x="880" y="255" width="1" height="1" fill="#000"/>
<rect x="914" y="255" width="1" height="1" fill="#000"/>
<rect x="894" y="264" width="1" height="1" fill="#000"/>
<rect x="905" y="264" width="1" height="1" fill="#000"/>
<rect x="880" y="266" width="1" height="1" fill="#000"/>
<rect x="896" y="273" width="1" height="1" fill="#000"/>
<rect x="908" y="273" width="1" height="1" fill="#000"/>
<rect x="880" y="278" width="1" height="1" fill="#000"/>
<rect x="914" y="279" width="1" height="1" fill="#000"/>
<rect x="880" y="289" width="1" height="1" fill="#000"/>
<rect x="914" y="290" width="1" height="1" fill="#000"/>
<rect x="880" y="301" width="1" height="1" fill="#000"/>
<rect x="914" y="302" width="1" height="1" fill="#000"/>
<rect x="880" y="313" width="1" height="1" fill="#000"/>
<rect x="914" y="313" width="1" height="1" fill="#000"/>
<rect x="880" y="324" width="1" height="1" fill="#000"/>
<rect x="890" y="326" width="1" height="1" fill="#000"/>
<rect x="901" y="326" width="1" height="1" fill="#000"/>
<rect x="887" y="375" width="1" height="1" fill="#000"/>
<rect x="898" y="375" width="1" height="1" fill="#000"/>
<rect x="910" y="375" width="1" height="1" fill="#000"/>
<rect x="880" y="382" width="1" height="1" fill="#000"/>
<rect x="914" y="383" width="1" height="1" fill="#000"/>
<rect x="880" y="393" width="1" height="1" fill="#000"/>
<rect x="914" y="394" width="1" height="1" fill="#000"/>
<rect x="880" y="405" width="1" height="1" fill="#000"/>
<rect x="914" y="406" width="1" height="1" fill="#000"/>
<rect x="880" y="417" width="1" height="1" fill="#000"/>
<rect x="914" y="417" width="1" height="1" fill="#000"/>
<rect x="880" y="428" width="1" height="1" fill="#000"/>
<rect x="903" y="428" width="1" height="1" fill="#000"/>
<rect x="894" y="437" width="1" height="1" fill="#000"/>
<rect x="906" y="437" width="1" height="1" fill="#000"/>
<rect x="880" y="440" width="1" height="1" fill="#000"/>
<rect x="914" y="440" width="1" height="1" fill="#000"/>
<rect x="880" y="451" width="1" height="1" fill="#000"/>
<rect x="914" y="452" width="1" height="1" fill="#000"/>
<rect x="880" y="463" width="1" height="1" fill="#000"/>
<rect x="914" y="463" width="1" height="1" fill="#000"/>
<rect x="884" y="470" width="1" height="1" fill="#000"/>
<rect x="896" y="470" width="1" height="1" fill="#000"/>
<rect x="902" y="475" width="1" height="1" fill="#000"/>
<rect x="904" y="497" width="1" height="1" fill="#000"/>
<rect x="914" y="498" width="1" height="1" fill="#000"/>
<rect x="901" y="500" width="1" height="1" fill="#000"/>
<rect x="887" y="502" width="1" height="1" fill="#000"/>
<rect x="899" y="502" width="1" height="1" fill="#000"/>
<rect x="880" y="509" width="1" height="1" fill="#000"/>
<rect x="914" y="510" width="1" height="1" fill="#000"/>
<rect x="880" y="521" width="1" height="1" fill="#000"/>
<rect x="914" y="521" width="1" height="1" fill="#000"/>
<rect x="880" y="532" width="1" height="1" fill="#000"/>
<rect x="914" y="533" width="1" height="1" fill="#000"/>
<rect x="880" y="544" width="1" height="1" fill="#000"/>
<rect x="914" y="544" width="1" height="1" fill="#000"/>
<rect x="881" y="554" width="1" height="1" fill="#000"/>
<rect x="893" y="554" width="1" height="1" fill="#000"/>
<rect x="904" y="554" width="1" height="1" fill="#000"/>
<rect x="234" y="657" width="1" height="1" fill="#000"/>
<rect x="245" y="657" width="1" height="1" fill="#000"/>
<rect x="257" y="657" width="1" height="1" fill="#000"/>
<rect x="292" y="657" width="1" height="1" fill="#000"/>
<rect x="303" y="657" width="1" height="1" fill="#000"/>
<rect x="315" y="657" width="1" height="1" fill="#000"/>
<rect x="326" y="657" width="1" height="1" fill="#000"/>
<rect x="338" y="657" width="1" height="1" fill="#000"/>
<rect x="349" y="657" width="1" height="1" fill="#000"/>
<rect x="361" y="657" width="1" height="1" fill="#000"/>
<rect x="372" y="657" width="1" height="1" fill="#000"/>
<rect x="384" y="657" width="1" height="1" fill="#000"/>
<rect x="396" y="657" width="1" height="1" fill="#000"/>
<rect x="407" y="657" width="1" height="1" fill="#000"/>
<rect x="419" y="657" width="1" height="1" fill="#000"/>
<rect x="430" y="657" width="1" height="1" fill="#000"/>
<rect x="442" y="657" width="1" height="1" fill="#000"/>
<rect x="453" y="657" width="1" height="1" fill="#000"/>
<rect x="465" y="657" width="1" height="1" fill="#000"/>
<rect x="523" y="657" width="1" height="1" fill="#000"/>
<rect x="534" y="657" width="1" height="1" fill="#000"/>
<rect x="546" y="657" width="1" height="1" fill="#000"/>
<rect x="557" y="657" width="1" height="1" fill="#000"/>
<rect x="569" y="657" width="1" height="1" fill="#000"/>
<rect x="581" y="657" width="1" height="1" fill="#000"/>
<rect x="592" y="657" width="1" height="1" fill="#000"/>
<rect x="604" y="657" width="1" height="1" fill="#000"/>
<rect x="615" y="657" width="1" height="1" fill="#000"/>
<rect x="627" y="657" width="1" height="1" fill="#000"/>
<rect x="638" y="657" width="1" height="1" fill="#000"/>
<rect x="650" y="657" width="1" height="1" fill="#000"/>
<rect x="662" y="657" width="1" height="1" fill="#000"/>
<rect x="673" y="657" width="1" height="1" fill="#000"/>
<rect x="685" y="657" width="1" height="1" fill="#000"/>
<rect x="696" y="657" width="1" height="1" fill="#000"/>
<rect x="731" y="657" width="1" height="1" fill="#000"/>
<rect x="742" y="657" width="1" height="1" fill="#000"/>
<rect x="754" y="657" width="1" height="1" fill="#000"/>
<rect x="766" y="657" width="1" height="1" fill="#000"/>
<rect x="705" y="660" width="1" height="1" fill="#000"/>
<rect x="519" y="661" width="1" height="1" fill="#000"/>
<rect x="472" y="662" width="1" height="1" fill="#000"/>
<rect x="262" y="663" width="1" height="1" fill="#000"/>
<rect x="724" y="664" width="1" height="1" fill="#000"/>
<rect x="224" y="667" width="1" height="1" fill="#000"/>
<rect x="767" y="667" width="1" height="1" fill="#000"/>
<rect x="281" y="668" width="1" height="1" fill="#000"/>
<rect x="280" y="669" width="1" height="1" fill="#000"/>
<rect x="707" y="669" width="1" height="1" fill="#000"/>
<rect x="266" y="671" width="1" height="1" fill="#000"/>
<rect x="277" y="672" width="1" height="1" fill="#000"/>
<rect x="519" y="672" width="1" height="1" fill="#000"/>
<rect x="472" y="673" width="1" height="1" fill="#000"/>
<rect x="224" y="678" width="1" height="1" fill="#000"/>
<rect x="709" y="679" width="1" height="1" fill="#000"/>
<rect x="720" y="679" width="1" height="1" fill="#000"/>
<rect x="767" y="679" width="1" height="1" fill="#000"/>
<rect x="266" y="683" width="1" height="1" fill="#000"/>
<rect x="277" y="683" width="1" height="1" fill="#000"/>
<rect x="519" y="684" width="1" height="1" fill="#000"/>
<rect x="472" y="685" width="1" height="1" fill="#000"/>
<rect x="224" y="690" width="1" height="1" fill="#000"/>
<rect x="234" y="691" width="1" height="1" fill="#000"/>
<rect x="246" y="691" width="1" height="1" fill="#000"/>
<rect x="258" y="691" width="1" height="1" fill="#000"/>
<rect x="281" y="691" width="1" height="1" fill="#000"/>
<rect x="292" y="691" width="1" height="1" fill="#000"/>
<rect x="304" y="691" width="1" height="1" fill="#000"/>
<rect x="315" y="691" width="1" height="1" fill="#000"/>
<rect x="327" y="691" width="1" height="1" fill="#000"/>
<rect x="338" y="691" width="1" height="1" fill="#000"/>
<rect x="350" y="691" width="1" height="1" fill="#000"/>
<rect x="362" y="691" width="1" height="1" fill="#000"/>
<rect x="373" y="691" width="1" height="1" fill="#000"/>
<rect x="385" y="691" width="1" height="1" fill="#000"/>
<rect x="396" y="691" width="1" height="1" fill="#000"/>
<rect x="408" y="691" width="1" height="1" fill="#000"/>
<rect x="419" y="691" width="1" height="1" fill="#000"/>
<rect x="431" y="691" width="1" height="1" fill="#000"/>
<rect x="443" y="691" width="1" height="1" fill="#000"/>
<rect x="454" y="691" width="1" height="1" fill="#000"/>
<rect x="466" y="691" width="1" height="1" fill="#000"/>
<rect x="523" y="691" width="1" height="1" fill="#000"/>
<rect x="535" y="691" width="1" height="1" fill="#000"/>
<rect x="547" y="691" width="1" height="1" fill="#000"/>
<rect x="558" y="691" width="1" height="1" fill="#000"/>
<rect x="570" y="691" width="1" height="1" fill="#000"/>
<rect x="581" y="691" width="1" height="1" fill="#000"/>
<rect x="593" y="691" width="1" height="1" fill="#000"/>
<rect x="604" y="691" width="1" height="1" fill="#000"/>
<rect x="616" y="691" width="1" height="1" fill="#000"/>
<rect x="628" y="691" width="1" height="1" fill="#000"/>
<rect x="639" y="691" width="1" height="1" fill="#000"/>
<rect x="651" y="691" width="1" height="1" fill="#000"/>
<rect x="662" y="691" width="1" height="1" fill="#000"/>
<rect x="674" y="691" width="1" height="1" fill="#000"/>
<rect x="685" y="691" width="1" height="1" fill="#000"/>
<rect x="697" y="691" width="1" height="1" fill="#000"/>
<rect x="720" y="691" width="1" height="1" fill="#000"/>
<rect x="732" y="691" width="1" height="1" fill="#000"/>
<rect x="743" y="691" width="1" height="1" fill="#000"/>
<rect x="755" y="691" width="1" height="1" fill="#000"/>
</svg>

<div id="tb">
 <div class="seg" style="left:0;width:5px;background:#f0f0f0"></div>
 <div class="vd" style="left:5px"></div>
 <div class="seg" style="left:6px;width:19px;background:#f4f4f4"></div>
 <div class="mk" style="left:13px"></div><div class="mk" style="left:17px"></div>
 <div class="vd" style="left:25px"></div>
 <div class="seg" style="left:26px;width:148px;background:#fff"></div>
 <div class="seg" style="left:30px;width:12px;height:1px;background:#000"></div>
 <div class="vd" style="left:174px"></div><div class="seg" style="left:175px;width:9px;background:#f6f6f6"></div><div class="mk" style="left:178px"></div><div class="vd" style="left:184px"></div>
 <div class="seg" style="left:185px;width:198px;background:#fff"></div>
 <div class="vd" style="left:383px"></div><div class="seg" style="left:384px;width:9px;background:#f6f6f6"></div><div class="mk" style="left:387px"></div><div class="vd" style="left:393px"></div>
 <div class="seg" style="left:394px;width:198px;background:#fff"></div>
 <div class="vd" style="left:592px"></div><div class="seg" style="left:593px;width:9px;background:#f6f6f6"></div><div class="mk" style="left:596px"></div><div class="vd" style="left:602px;background:#c8c8c8"></div>
 <div class="seg" style="left:603px;width:98px;background:#fff"></div>
 <div class="seg" style="left:605px;width:77px;height:4px;background:#c6c6c6"></div>
 <div class="vd" style="left:701px;background:#c8c8c8"></div><div class="seg" style="left:702px;width:3px;background:#f6f6f6"></div><div class="vd" style="left:705px"></div>
</div>
<div id="sep1"></div><div id="sep2"></div>
<div id="strip">
 <svg id="tabsvg" width="1158" height="21" viewBox="0 7 1158 21">
  <path d="M0 17.5 L9.5 8.5 H121.5 Q123.5 8.5 123.5 10.5 V26.5" fill="#f0f0f0" stroke="#9a9a9a"/>
  <path d="M125.5 26.5 V15 L131 8.5 H227.5 Q229.5 8.5 229.5 10.5 V26.5" fill="#f0f0f0" stroke="#9a9a9a"/>
  <path d="M231.5 26.5 V15 L237 8.5 H331.5 Q333.5 8.5 333.5 10.5 V26.5" fill="#f0f0f0" stroke="#9a9a9a"/>
  <path d="M323 27.5 L340.5 8.5 H467.5 Q469.5 8.5 469.5 10.5 V27.5 Z" fill="#fff" stroke="none"/>
  <path d="M323 26.5 L340.5 8.5 H467.5 Q469.5 8.5 469.5 10.5 V26.5" fill="none" stroke="#9a9a9a"/>
  <g id="ic">
  </g>
 </svg>
 <div class="ico" style="left:11px"><svg width="16" height="15" viewBox="0 0 16 15"><path d="M0.5 0.5 H10 L14.5 4 V13.5 H0.5 Z" fill="#fdfdfd" stroke="#d8d8d8"/><path d="M0.5 0.5 V13.5" stroke="#a8a8a8" fill="none"/><path d="M10 0.5 V4 H14.5" fill="#ececec" stroke="#cfcfcf"/><text x="1.2" y="10.3" font-size="10.5" font-weight="bold" fill="#3192e8" font-family="Liberation Sans, sans-serif" textLength="13" lengthAdjust="spacingAndGlyphs">yc</text></svg></div><div class="ico" style="left:133px"><svg width="16" height="15" viewBox="0 0 16 15"><path d="M0.5 0.5 H10 L14.5 4 V13.5 H0.5 Z" fill="#fdfdfd" stroke="#d8d8d8"/><path d="M0.5 0.5 V13.5" stroke="#a8a8a8" fill="none"/><path d="M10 0.5 V4 H14.5" fill="#ececec" stroke="#cfcfcf"/><text x="1.2" y="10.3" font-size="10.5" font-weight="bold" fill="#3192e8" font-family="Liberation Sans, sans-serif" textLength="13" lengthAdjust="spacingAndGlyphs">yc</text></svg></div><div class="ico" style="left:238px"><svg width="16" height="15" viewBox="0 0 16 15"><path d="M0.5 0.5 H10 L14.5 4 V13.5 H0.5 Z" fill="#fdfdfd" stroke="#d8d8d8"/><path d="M0.5 0.5 V13.5" stroke="#a8a8a8" fill="none"/><path d="M10 0.5 V4 H14.5" fill="#ececec" stroke="#cfcfcf"/><text x="1.2" y="10.3" font-size="10.5" font-weight="bold" fill="#3192e8" font-family="Liberation Sans, sans-serif" textLength="13" lengthAdjust="spacingAndGlyphs">yc</text></svg></div><div class="ico" style="left:341px"><svg width="16" height="15" viewBox="0 0 16 15"><path d="M0.5 0.5 H10 L14.5 4 V13.5 H0.5 Z" fill="#fdfdfd" stroke="#d8d8d8"/><path d="M0.5 0.5 V13.5" stroke="#a8a8a8" fill="none"/><path d="M10 0.5 V4 H14.5" fill="#ececec" stroke="#cfcfcf"/><text x="1.2" y="10.3" font-size="10.5" font-weight="bold" fill="#3192e8" font-family="Liberation Sans, sans-serif" textLength="13" lengthAdjust="spacingAndGlyphs">yc</text></svg></div>
 <span class="tl" style="left:32.5px">A0-装配图.dwg</span>
 <span class="tl" style="left:154.5px">A1-A板.dwg</span>
 <span class="tl" style="left:259.5px">A1-B板.dwg</span>
 <span class="tl b" style="left:361.5px">A1-动模座板.dwg</span>
</div>

</body></html>
